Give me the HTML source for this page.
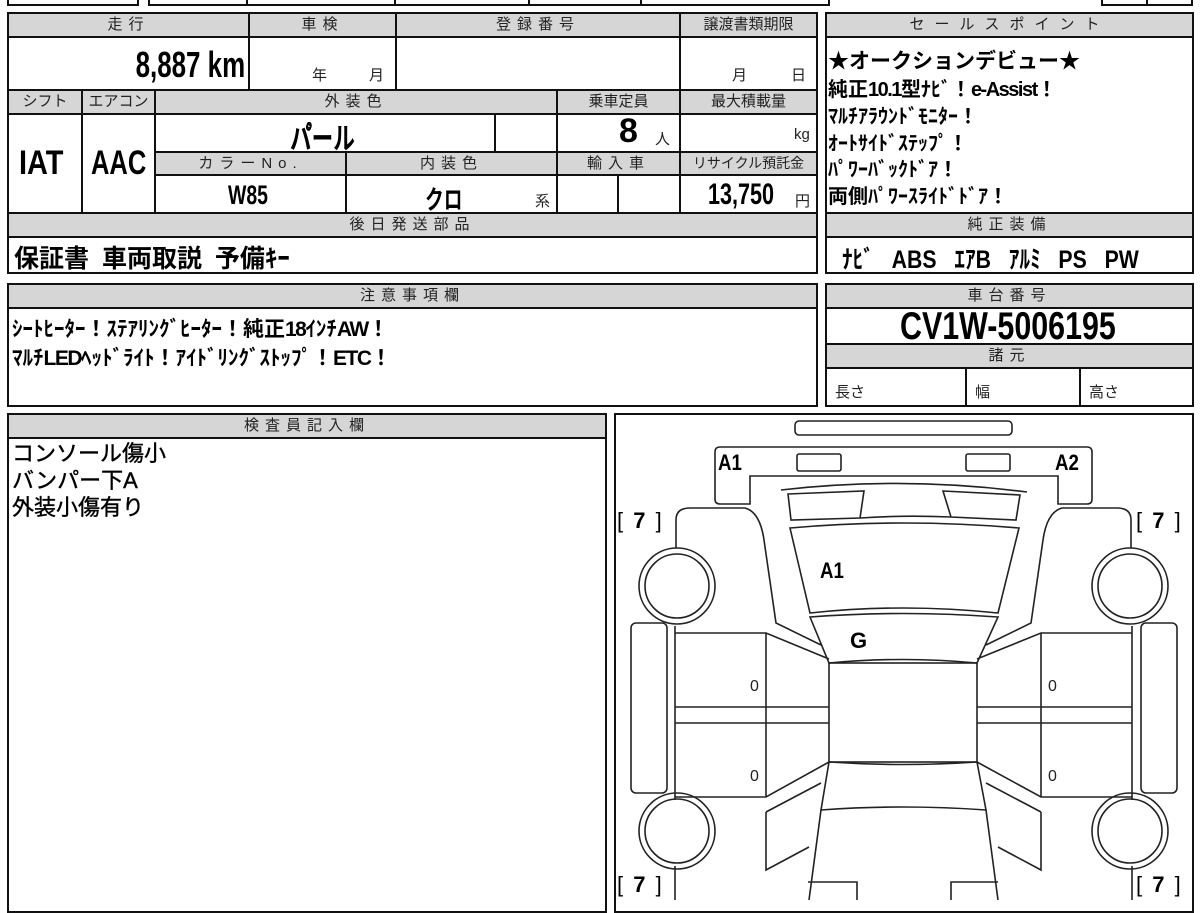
<!DOCTYPE html>
<html><head><meta charset="utf-8"><style>
*{margin:0;padding:0;box-sizing:border-box}
body{width:1200px;height:900px;background:#fff;position:relative;overflow:hidden;font-family:"Liberation Sans","Noto Sans CJK JP",sans-serif;color:#000}
.c{position:absolute;border:2px solid #111;background:#fff}
.h{background:#d6d6d6;text-align:center;font-size:15px;letter-spacing:6px;color:#222;line-height:21px;font-weight:normal}
.t{position:absolute;white-space:nowrap;font-weight:bold}
.n{display:inline-block;transform:scaleX(.72);transform-origin:left center}
.r{transform-origin:right center}
.s{position:absolute;white-space:nowrap;font-size:15px;color:#222}
.l{letter-spacing:-1.5px}
</style></head><body>
<div class="c" style="left:7px;top:-12px;width:132px;height:18px"></div>
<div class="c" style="left:148px;top:-12px;width:682px;height:18px"></div>
<div class="c" style="left:246px;top:-12px;width:150px;height:18px"></div>
<div class="c" style="left:394px;top:-12px;width:136px;height:18px"></div>
<div class="c" style="left:528px;top:-12px;width:114px;height:18px"></div>
<div class="c" style="left:1101px;top:-12px;width:92px;height:18px"></div>
<div class="c" style="left:1146px;top:-12px;width:47px;height:18px"></div>

<div class="c" style="left:7px;top:12px;width:811px;height:262px"></div>
<div class="c h" style="left:7px;top:12px;width:243px;height:26px">走行</div>
<div class="c h" style="left:248px;top:12px;width:149px;height:26px">車検</div>
<div class="c h" style="left:395px;top:12px;width:286px;height:26px">登録番号</div>
<div class="c h" style="left:679px;top:12px;width:139px;height:26px;letter-spacing:0">譲渡書類期限</div>
<div class="c" style="left:7px;top:36px;width:243px;height:55px"></div>
<div class="c" style="left:248px;top:36px;width:149px;height:55px"></div>
<div class="c" style="left:395px;top:36px;width:286px;height:55px"></div>
<div class="c" style="left:679px;top:36px;width:139px;height:55px"></div>
<div class="t" style="right:955px;top:44px;font-size:36px"><span class="n r">8,887 km</span></div>
<div class="s" style="left:312px;top:64px">年</div><div class="s" style="left:369px;top:64px">月</div>
<div class="s" style="left:732px;top:64px">月</div><div class="s" style="left:791px;top:64px">日</div>

<div class="c h" style="left:7px;top:89px;width:76px;height:26px;letter-spacing:0">シフト</div>
<div class="c h" style="left:81px;top:89px;width:75px;height:26px;letter-spacing:0">エアコン</div>
<div class="c h" style="left:154px;top:89px;width:404px;height:26px">外装色</div>
<div class="c h" style="left:556px;top:89px;width:125px;height:26px;letter-spacing:0">乗車定員</div>
<div class="c h" style="left:679px;top:89px;width:139px;height:26px;letter-spacing:0">最大積載量</div>
<div class="c" style="left:7px;top:113px;width:76px;height:101px"></div>
<div class="c" style="left:81px;top:113px;width:75px;height:101px"></div>
<div class="c" style="left:154px;top:113px;width:342px;height:40px"></div>
<div class="c" style="left:494px;top:113px;width:64px;height:40px"></div>
<div class="c" style="left:556px;top:113px;width:125px;height:40px"></div>
<div class="c" style="left:679px;top:113px;width:139px;height:40px"></div>
<div class="t" style="left:19px;top:144px;font-size:34px"><span class="n" style="transform:scaleX(.85)">IAT</span></div>
<div class="t" style="left:91px;top:144px;font-size:34px"><span class="n" style="transform:scaleX(.75)">AAC</span></div>
<div class="t" style="left:290px;top:114px;font-size:30px"><span class="n">パ゚ール</span></div>
<div class="t" style="left:619px;top:112px;font-size:34px">8</div>
<div class="s" style="left:655px;top:128px">人</div>
<div class="s" style="left:794px;top:126px">kg</div>

<div class="c h" style="left:154px;top:151px;width:193px;height:25px">カラーNo.</div>
<div class="c h" style="left:345px;top:151px;width:213px;height:25px">内装色</div>
<div class="c h" style="left:556px;top:151px;width:125px;height:25px">輸入車</div>
<div class="c h" style="left:679px;top:151px;width:139px;height:25px;letter-spacing:0;font-size:14px">リサイクル預託金</div>
<div class="c" style="left:154px;top:174px;width:193px;height:40px"></div>
<div class="c" style="left:345px;top:174px;width:213px;height:40px"></div>
<div class="c" style="left:556px;top:174px;width:63px;height:40px"></div>
<div class="c" style="left:617px;top:174px;width:64px;height:40px"></div>
<div class="c" style="left:679px;top:174px;width:139px;height:40px"></div>
<div class="t" style="left:228px;top:180px;font-size:27px"><span class="n">W85</span></div>
<div class="t" style="left:425px;top:180px;font-size:26px"><span class="n">クロ</span></div>
<div class="s" style="left:535px;top:190px">系</div>
<div class="t" style="left:708px;top:178px;font-size:30px"><span class="n">13,750</span></div>
<div class="s" style="left:795px;top:190px">円</div>

<div class="c h" style="left:7px;top:212px;width:811px;height:26px">後日発送部品</div>
<div class="t" style="left:14px;top:239px;font-size:25px;word-spacing:6px">保証書 車両取説 予備ｷｰ</div>

<div class="c" style="left:825px;top:12px;width:369px;height:262px"></div>
<div class="c h" style="left:825px;top:12px;width:369px;height:26px;letter-spacing:10px">セールスポイント</div>
<div class="t" style="left:828px;top:45px;font-size:21px">★オークションデビュー★</div>
<div class="t" style="left:828px;top:73px;font-size:20px">純正<span class="l">10.1</span>型ﾅﾋﾞ！<span class="l">e-Assist</span>！</div>
<div class="t" style="left:828px;top:100px;font-size:20px">ﾏﾙﾁｱﾗｳﾝﾄﾞﾓﾆﾀｰ！</div>
<div class="t" style="left:828px;top:127px;font-size:20px">ｵｰﾄｻｲﾄﾞｽﾃｯﾌﾟ！</div>
<div class="t" style="left:828px;top:153px;font-size:20px">ﾊﾟﾜｰﾊﾞｯｸﾄﾞｱ！</div>
<div class="t" style="left:828px;top:180px;font-size:20px">両側ﾊﾟﾜｰｽﾗｲﾄﾞﾄﾞｱ！</div>
<div class="c h" style="left:825px;top:212px;width:369px;height:26px">純正装備</div>
<div class="t" style="left:842px;top:240px;font-size:25px;word-spacing:14px"><span class="n" style="transform:scaleX(.85)">ﾅﾋﾞ ABS ｴｱB ｱﾙﾐ PS PW</span></div>

<div class="c" style="left:7px;top:283px;width:811px;height:124px"></div>
<div class="c h" style="left:7px;top:283px;width:811px;height:26px">注意事項欄</div>
<div class="t" style="left:12px;top:313px;font-size:21px">ｼｰﾄﾋｰﾀｰ！ｽﾃｱﾘﾝｸﾞﾋｰﾀｰ！純正<span class="l">18</span>ｲﾝﾁ<span class="l">AW</span>！</div>
<div class="t" style="left:12px;top:342px;font-size:21px">ﾏﾙﾁ<span class="l">LED</span>ﾍｯﾄﾞﾗｲﾄ！ｱｲﾄﾞﾘﾝｸﾞｽﾄｯﾌﾟ！<span class="l">ETC</span>！</div>

<div class="c" style="left:825px;top:283px;width:369px;height:124px"></div>
<div class="c h" style="left:825px;top:283px;width:369px;height:26px">車台番号</div>
<div class="t" style="left:900px;top:305px;font-size:39px"><span class="n" style="transform:scaleX(.78)">CV1W-5006195</span></div>
<div class="c h" style="left:825px;top:343px;width:369px;height:26px">諸元</div>
<div class="c" style="left:825px;top:367px;width:142px;height:40px"></div>
<div class="c" style="left:965px;top:367px;width:116px;height:40px"></div>
<div class="c" style="left:1079px;top:367px;width:115px;height:40px"></div>
<div class="s" style="left:835px;top:381px">長さ</div>
<div class="s" style="left:975px;top:381px">幅</div>
<div class="s" style="left:1089px;top:381px">高さ</div>

<div class="c" style="left:7px;top:413px;width:600px;height:500px"></div>
<div class="c h" style="left:7px;top:413px;width:600px;height:26px">検査員記入欄</div>
<div class="t" style="left:12px;top:440px;font-size:22px;line-height:27px;font-weight:normal;-webkit-text-stroke:.4px #000">コンソール傷小<br>バンパー下A<br>外装小傷有り</div>

<div class="c" style="left:614px;top:413px;width:580px;height:500px"></div>
<svg style="position:absolute;left:0;top:0" width="1200" height="900" fill="none" stroke="#222" stroke-width="1.6">
<rect x="795" y="421" width="217" height="14" rx="4"/>
<path d="M720 447 H1087 Q1092 447 1092 452 V499 Q1092 504 1087 504 H1058 V476 H750 V504 H720 Q715 504 715 499 V452 Q715 447 720 447Z"/>
<rect x="797" y="454" width="44" height="17" rx="2"/>
<rect x="966" y="454" width="44" height="17" rx="2"/>
<path d="M781 490 Q903 476 1027 492"/>
<path d="M788 494 L864 491 L860 518 L791 520Z"/>
<path d="M943 491 L1020 495 L1016 520 L951 517Z"/>
<path d="M860 518 Q903 515 951 517"/>
<path d="M790 528 Q903 518 1019 528 L998 613 Q903 603 810 613Z"/>
<path d="M810 617 Q903 610 998 617 L977 663 Q903 656 829 663Z"/>
<rect x="829" y="663" width="148" height="99"/>
<path d="M829 762 Q903 767 977 762 L986 810 Q903 804 821 810Z"/>
<path d="M821 810 L809 900 M986 810 L998 900"/>
<path d="M676 548 V520 Q676 508 690 508 H745 Q760 512 764 540 L776 623 L821 645"/>
<path d="M1131 548 V520 Q1131 508 1117 508 H1062 Q1047 512 1043 540 L1031 623 L986 645"/>
<circle cx="677" cy="586" r="38"/><circle cx="677" cy="586" r="32"/>
<circle cx="1130" cy="586" r="38"/><circle cx="1130" cy="586" r="32"/>
<circle cx="677" cy="831" r="38"/><circle cx="677" cy="831" r="32"/>
<circle cx="1130" cy="831" r="38"/><circle cx="1130" cy="831" r="32"/>
<rect x="631" y="623" width="36" height="170" rx="5"/>
<rect x="1141" y="623" width="36" height="170" rx="5"/>
<path d="M675 633 H766 L829 659 M675 707 H829 M675 723 H829 M675 797 H766 L829 762 M766 633 V797 M675 626 V800"/>
<path d="M1132 633 H1041 L977 659 M1132 707 H977 M1132 723 H977 M1132 797 H1041 L977 762 M1041 633 V797 M1132 626 V800"/>
<path d="M766 812 L821 783 M766 812 V870 L809 847 M1041 812 L986 783 M1041 812 V870 L998 847"/>
<path d="M675 866 V900 M1132 866 V900"/>
<path d="M808 882 H857 V900 M998 882 H951 V900"/>
</svg>
<div class="t" style="left:718px;top:450px;font-size:22px"><span class="n" style="transform:scaleX(.85)">A1</span></div>
<div class="t" style="left:1055px;top:450px;font-size:22px"><span class="n" style="transform:scaleX(.85)">A2</span></div>
<div class="t" style="left:820px;top:558px;font-size:22px"><span class="n" style="transform:scaleX(.85)">A1</span></div>
<div class="t" style="left:850px;top:628px;font-size:22px">G</div>
<div class="s" style="left:750px;top:678px;font-size:16px">0</div>
<div class="s" style="left:750px;top:768px;font-size:16px">0</div>
<div class="s" style="left:1048px;top:678px;font-size:16px">0</div>
<div class="s" style="left:1048px;top:768px;font-size:16px">0</div>
<div class="t" style="left:617px;top:508px;font-size:22px;font-weight:normal;word-spacing:4px">[ <b>7</b> ]</div>
<div class="t" style="left:1136px;top:508px;font-size:22px;font-weight:normal;word-spacing:4px">[ <b>7</b> ]</div>
<div class="t" style="left:617px;top:872px;font-size:22px;font-weight:normal;word-spacing:4px">[ <b>7</b> ]</div>
<div class="t" style="left:1136px;top:872px;font-size:22px;font-weight:normal;word-spacing:4px">[ <b>7</b> ]</div>
</body></html>
